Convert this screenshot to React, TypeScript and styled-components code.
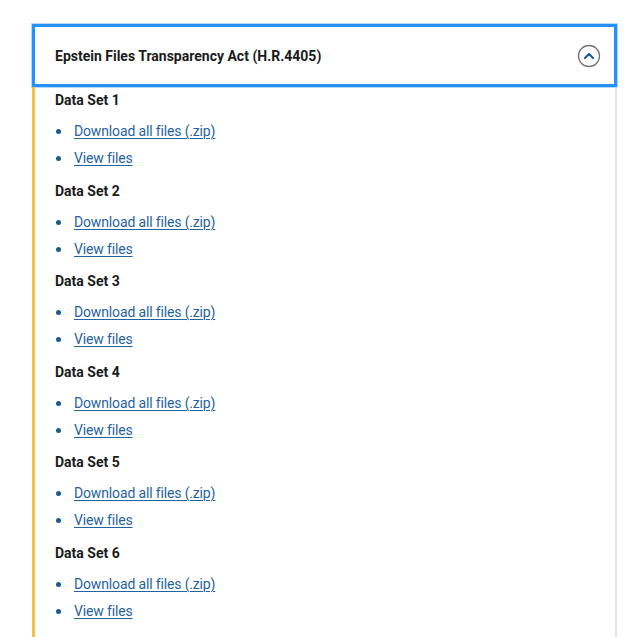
import React from "react";
import styled, { createGlobalStyle } from "styled-components";

const GlobalStyle = createGlobalStyle`
  body {
    margin: 0;
    background: #ffffff;
    font-family: Roboto, "Liberation Sans", sans-serif;
    color: #1b1b1b;
  }
`;

const Page = styled.div`
  padding: 24px 0 0 32px;
  width: 585px;
`;

const Accordion = styled.section`
  display: flex;
  flex-direction: column;
`;

const HeaderButton = styled.button`
  display: flex;
  align-items: center;
  justify-content: space-between;
  height: 63px;
  padding: 0 13px 0 20px;
  background: #ffffff;
  border: 3px solid #2491ff;
  box-shadow: 0 0 0 1px rgba(36, 145, 255, 0.35);
  font-family: Roboto, "Liberation Sans", sans-serif;
  font-size: 14px;
  font-weight: 700;
  color: #1b1b1b;
  text-align: left;
  cursor: pointer;
`;

const Content = styled.div`
  border-left: 3px solid #f7c03f;
  border-right: 2px solid #e6e6e6;
  padding: 3px 20px 10px 20px;
`;

const SetTitle = styled.h4`
  margin: 0;
  font-size: 14px;
  line-height: 20px;
  font-weight: 700;
  color: #1b1b1b;
`;

const LinkList = styled.ul`
  margin: 8px 0 8.5px;
  padding-left: 1px;
  list-style: none;
`;

const Item = styled.li`
  display: flex;
  align-items: center;
  gap: 13px;
  line-height: 27px;
  font-size: 14px;

  &::before {
    content: "";
    width: 5px;
    height: 5px;
    border-radius: 50%;
    background: #1f5a84;
    flex-shrink: 0;
  }
`;

const FileLink = styled.a`
  color: #1f63a0;
  letter-spacing: -0.15px;
  text-decoration: underline;
  text-decoration-thickness: 1px;
  text-underline-offset: 2px;
`;

const ToggleIcon = () => (
  <svg width="24" height="24" viewBox="0 0 24 24">
    <circle cx="12" cy="12" r="10.5" fill="none" stroke="#71767a" strokeWidth="1.3" />
    <path
      d="M8 14 L12 10 L16 14"
      fill="none"
      stroke="#1a5e9a"
      strokeWidth="2.2"
      strokeLinecap="round"
      strokeLinejoin="round"
    />
  </svg>
);

const sets = [1, 2, 3, 4, 5, 6];

export default function App() {
  return (
    <>
      <GlobalStyle />
      <Page>
        <Accordion>
          <HeaderButton aria-expanded="true">
            Epstein Files Transparency Act (H.R.4405)
            <ToggleIcon />
          </HeaderButton>
          <Content>
            {sets.map((n) => (
              <div key={n}>
                <SetTitle>Data Set {n}</SetTitle>
                <LinkList>
                  <Item>
                    <FileLink href="#">Download all files (.zip)</FileLink>
                  </Item>
                  <Item>
                    <FileLink href="#">View files</FileLink>
                  </Item>
                </LinkList>
              </div>
            ))}
          </Content>
        </Accordion>
      </Page>
    </>
  );
}
